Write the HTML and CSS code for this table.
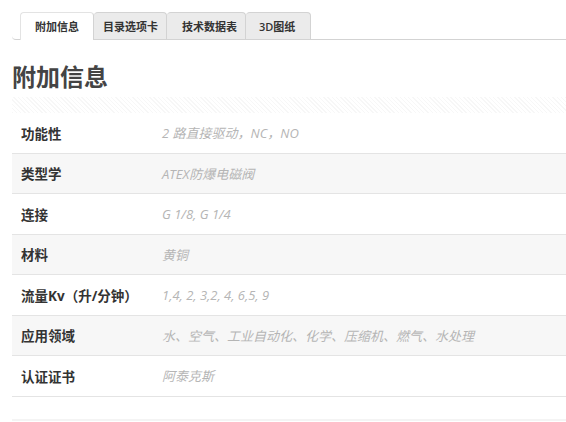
FILE: index.html
```html
<!DOCTYPE html>
<html lang="zh-CN">
<head>
    <meta charset="UTF-8">
    <meta name="viewport" content="width=device-width, initial-scale=1.0">
    <title>附加信息</title>
    <link rel="stylesheet" href="styles.css">
</head>
<body>
    <div class="page">
        <ul class="tabs">
            <li class="tab active">附加信息</li>
            <li class="tab">目录选项卡</li>
            <li class="tab">技术数据表</li>
            <li class="tab">3D图纸</li>
        </ul>
        <h2 class="title">附加信息</h2>
        <div class="hatch"></div>
        <table class="specs">
            <tr><th>功能性</th><td>2 路直接驱动，NC，NO</td></tr>
            <tr><th>类型学</th><td>ATEX防爆电磁阀</td></tr>
            <tr><th>连接</th><td>G 1/8, G 1/4</td></tr>
            <tr><th>材料</th><td>黄铜</td></tr>
            <tr><th>流量Kv（升/分钟）</th><td>1,4, 2, 3,2, 4, 6,5, 9</td></tr>
            <tr><th>应用领域</th><td>水、空气、工业自动化、化学、压缩机、燃气、水处理</td></tr>
            <tr><th>认证证书</th><td>阿泰克斯</td></tr>
        </table>
        <div class="foot-line"></div>
    </div>
</body>
</html>
```

FILE: styles.css
```css
body {
    margin: 0;
    padding: 0;
    background: #fff;
    font-family: "Open Sans", "Noto Sans CJK SC", sans-serif;
    color: #333;
}
.page {
    padding: 12px 0 0 12px;
}
.tabs {
    display: flex;
    list-style: none;
    margin: 0;
    padding: 0 0 0 8px;
    border-bottom: 1px solid #d3d3d3;
    border-bottom-left-radius: 4px;
}
.tab {
    height: 26px;
    line-height: 27px;
    font-size: 11px;
    font-weight: 600;
    color: #333;
    background: #ebebeb;
    border: 1px solid #d3d3d3;
    border-bottom: none;
    border-left: none;
    border-radius: 4px 4px 0 0;
    margin-bottom: -1px;
}
.tab.active {
    background: #fff;
    border-left: 1px solid #e3e3e3;
    border-top-color: #e3e3e3;
    height: 27px;
    padding: 0 14px;
}
.tab:nth-child(2) { padding: 0 8px 0 9px; }
.tab:nth-child(3) { padding: 0 8px 0 15px; }
.tab:nth-child(4) { padding: 0 15px 0 13px; }
.title {
    margin: 20px 0 0 0;
    font-size: 24px;
    line-height: 34px;
    font-weight: 700;
    color: #444;
}
.hatch {
    height: 16px;
    margin-top: 3px;
    background: repeating-linear-gradient(45deg, #f7f7f7 0 1px, #fff 1px 3px);
}
.specs {
    width: 100%;
    border-collapse: collapse;
    font-size: 13px;
}
.specs tr {
    border-bottom: 1px solid #e4e4e4;
}
.specs tr:nth-child(even) {
    background: #f7f7f7;
}
.specs th {
    width: 141px;
    height: 39.5px;
    padding: 0 0 0 9px;
    text-align: left;
    font-size: 13.5px;
    font-weight: 700;
    color: #333;
}
.specs td {
    padding: 0;
    color: #b5b5b5;
    font-style: italic;
}
.foot-line {
    height: 2px;
    margin-top: 22px;
    background: #f4f4f4;
}
```
